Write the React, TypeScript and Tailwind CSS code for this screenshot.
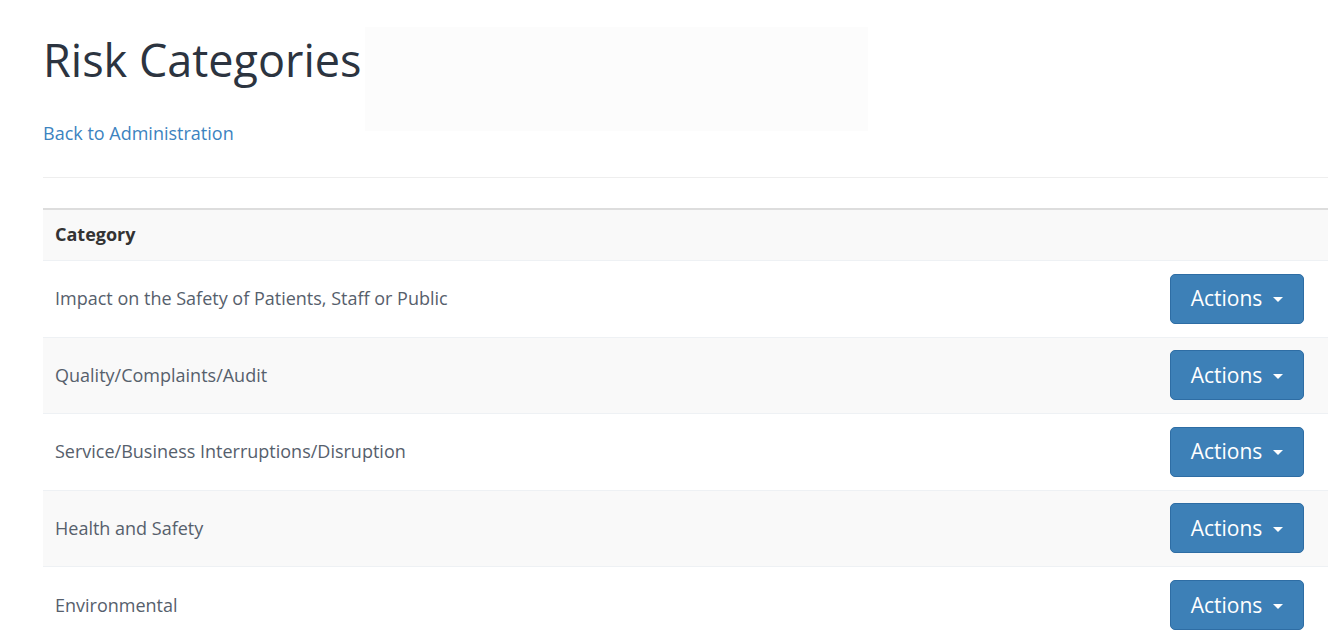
import React from "react";

const rows = [
  "Impact on the Safety of Patients, Staff or Public",
  "Quality/Complaints/Audit",
  "Service/Business Interruptions/Disruption",
  "Health and Safety",
  "Environmental",
];

function ActionsButton() {
  return (
    <button
      type="button"
      className="inline-flex items-center h-[50px] w-[134px] justify-center gap-[11px] rounded-[5px] border border-[#2e6da4] bg-[#3d80b7] text-white text-[21px] leading-none"
    >
      <span>Actions</span>
      <span className="inline-block w-0 h-0 border-l-[5px] border-r-[5px] border-t-[5px] border-l-transparent border-r-transparent border-t-white mt-[2px]" />
    </button>
  );
}

export default function App() {
  return (
    <div
      className="relative bg-white min-h-[643px] pl-[43px]"
      style={{ fontFamily: '"Open Sans", "Liberation Sans", sans-serif' }}
    >
      <div className="absolute left-[365px] top-[27px] w-[503px] h-[104px] bg-[#fcfcfc]" />
      <h1 className="relative pt-[35px] text-[45px] leading-[1.1] text-[#2c3440] font-normal">
        Risk Categories
      </h1>
      <div className="relative mt-[36px]">
        <a href="#" className="text-[18px] text-[#3c83c0] leading-[1.4]">
          Back to Administration
        </a>
      </div>
      <div className="mt-[31px] border-t border-[#eeeeee]" />
      <table className="mt-[30px] w-full border-collapse">
        <thead>
          <tr className="bg-[#f9f9f9] border-t-2 border-[#dddddd]">
            <th className="text-left h-[52px] px-[12px] text-[18px] font-bold text-[#333333]">
              Category
            </th>
            <th />
          </tr>
        </thead>
        <tbody>
          {rows.map((r, i) => (
            <tr
              key={r}
              className={`border-t border-[#eef1f4] ${i % 2 === 1 ? "bg-[#f9f9f9]" : "bg-white"}`}
            >
              <td className="px-[12px] h-[76.5px] text-[18px] text-[#56606c]">{r}</td>
              <td className="pr-[24px] text-right align-middle">
                <ActionsButton />
              </td>
            </tr>
          ))}
        </tbody>
      </table>
    </div>
  );
}
